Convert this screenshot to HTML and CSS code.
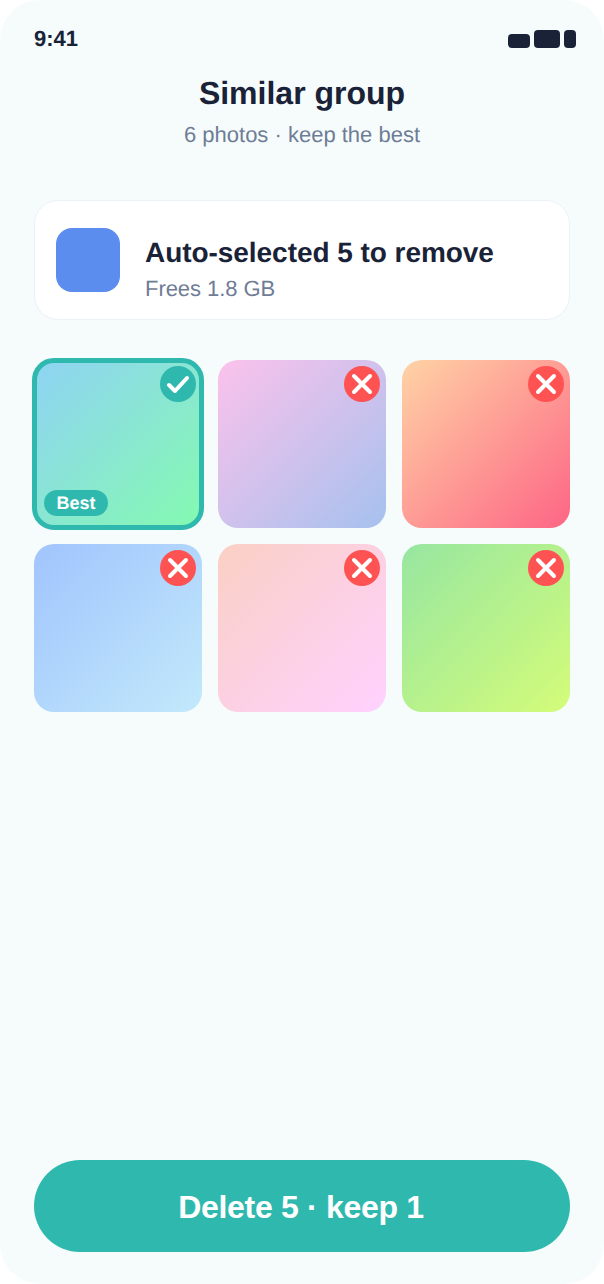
FILE: index.html
```html
<!DOCTYPE html>
<html lang="en">
	<head>
		<meta name="viewport" content="width=device-width, initial-scale=1">
		<title>Similar group</title>
		<link rel="stylesheet" href="styles.css">
	</head>

	<body>
		<div class="screen">
			<div class="status">
				<span class="time">9:41</span>
				<div class="status-icons">
					<span class="signal"></span>
					<span class="wifi"></span>
					<span class="battery"></span>
				</div>
			</div>

			<div class="head">
				<h1>Similar group</h1>
				<p>6 photos · keep the best</p>
			</div>

			<div class="card">
				<div class="card-icon"></div>
				<div class="card-text">
					<h2>Auto-selected 5 to remove</h2>
					<p>Frees 1.8 GB</p>
				</div>
			</div>

			<div class="grid">
				<div class="tile tile-1 keep">
					<span class="mark mark-keep">
						<svg viewBox="0 0 36 36"><path d="M9 19 L15 25 L27 12"/></svg>
					</span>
					<span class="best">Best</span>
				</div>
				<div class="tile tile-2">
					<span class="mark mark-remove">
						<svg viewBox="0 0 36 36"><path d="M10 10 L26 26 M26 10 L10 26"/></svg>
					</span>
				</div>
				<div class="tile tile-3">
					<span class="mark mark-remove">
						<svg viewBox="0 0 36 36"><path d="M10 10 L26 26 M26 10 L10 26"/></svg>
					</span>
				</div>
				<div class="tile tile-4">
					<span class="mark mark-remove">
						<svg viewBox="0 0 36 36"><path d="M10 10 L26 26 M26 10 L10 26"/></svg>
					</span>
				</div>
				<div class="tile tile-5">
					<span class="mark mark-remove">
						<svg viewBox="0 0 36 36"><path d="M10 10 L26 26 M26 10 L10 26"/></svg>
					</span>
				</div>
				<div class="tile tile-6">
					<span class="mark mark-remove">
						<svg viewBox="0 0 36 36"><path d="M10 10 L26 26 M26 10 L10 26"/></svg>
					</span>
				</div>
			</div>

			<button class="action">Delete 5 · keep 1</button>
		</div>
	</body>
</html>
```

FILE: styles.css
```css
* {
	box-sizing: border-box;
}
html, body {
	margin: 0;
	height: 100%;
	background: white;
	font-family: "Liberation Sans", Arial, sans-serif;
	color: #1a2238;
	text-rendering: geometricPrecision;
}
.screen {
	width: 604px;
	height: 1284px;
	border-radius: 40px;
	background: #f6fcfc;
	padding: 0 34px 32px;
	display: flex;
	flex-direction: column;
	overflow: hidden;
}
.status {
	height: 78px;
	flex-shrink: 0;
	display: flex;
	justify-content: space-between;
	align-items: center;
}
.time {
	font-size: 22px;
	font-weight: bold;
}
.status-icons {
	display: flex;
	align-items: flex-end;
	gap: 4px;
	margin-right: -6px;
	height: 18px;
}
.status-icons span {
	display: block;
	background: #1a2238;
}
.signal {
	width: 22px;
	height: 14px;
	border-radius: 4px;
}
.wifi {
	width: 26px;
	height: 18px;
	border-radius: 4px;
}
.battery {
	width: 12px;
	height: 18px;
	border-radius: 4px;
}
.head {
	text-align: center;
}
.head h1 {
	margin: 0;
	font-size: 32px;
	line-height: 30px;
	font-weight: bold;
}
.head p {
	margin: 14px 0 0;
	font-size: 22px;
	line-height: 26px;
	color: #6f7c96;
}
.card {
	margin-top: 52px;
	height: 120px;
	flex-shrink: 0;
	display: flex;
	align-items: center;
	gap: 25px;
	padding: 0 21px;
	background: white;
	border: 1px solid #ebf1f4;
	border-radius: 24px;
}
.card-icon {
	width: 64px;
	height: 64px;
	border-radius: 16px;
	background: #5b8def;
}
.card-text {
	padding-top: 19px;
	letter-spacing: -0.05px;
}
.card-text h2 {
	margin: 0;
	font-size: 28px;
	line-height: 32px;
	font-weight: bold;
}
.card-text p {
	margin: 7px 0 0;
	font-size: 22px;
	line-height: 26px;
	color: #6f7c96;
}
.grid {
	margin-top: 40px;
	display: grid;
	grid-template-columns: repeat(3, 168px);
	grid-auto-rows: 168px;
	gap: 16px;
}
.tile {
	position: relative;
	border-radius: 20px;
}
.tile-1 {
	background: linear-gradient(135deg, #8fd3f4, #84fab0);
}
.tile-2 {
	background: linear-gradient(135deg, #fbc2eb, #a6c1ee);
}
.tile-3 {
	background: linear-gradient(135deg, #ffd3a5, #fd6585);
}
.tile-4 {
	background: linear-gradient(135deg, #a1c4fd, #c2e9fb);
}
.tile-5 {
	background: linear-gradient(135deg, #fad0c4, #ffd1ff);
}
.tile-6 {
	background: linear-gradient(135deg, #96e6a1, #d4fc79);
}
/* ring sits over the tile edge, badges stay on top of it */
.keep::after {
	content: "";
	position: absolute;
	inset: -2px;
	border: 5px solid #2fb9ae;
	border-radius: 22px;
}
.mark {
	position: absolute;
	z-index: 1;
	top: 6px;
	right: 6px;
	width: 36px;
	height: 36px;
	border-radius: 50%;
}
.mark svg {
	display: block;
	width: 36px;
	height: 36px;
	fill: none;
	stroke: white;
	stroke-width: 4px;
	stroke-linecap: round;
	stroke-linejoin: round;
}
.mark-keep {
	background: #2fb9ae;
}
.mark-remove {
	background: #ff5252;
}
.best {
	position: absolute;
	z-index: 1;
	left: 10px;
	bottom: 12px;
	width: 64px;
	height: 26px;
	border-radius: 13px;
	background: #2fb9ae;
	color: white;
	font-size: 18px;
	font-weight: bold;
	line-height: 26px;
	text-align: center;
}
.action {
	margin-top: auto;
	height: 92px;
	flex-shrink: 0;
	border: 0;
	border-radius: 46px;
	padding: 2px 2px 0 0;
	background: #2fb9ae;
	color: white;
	font-family: inherit;
	font-size: 32px;
	font-weight: bold;
	letter-spacing: -0.3px;
}
```
